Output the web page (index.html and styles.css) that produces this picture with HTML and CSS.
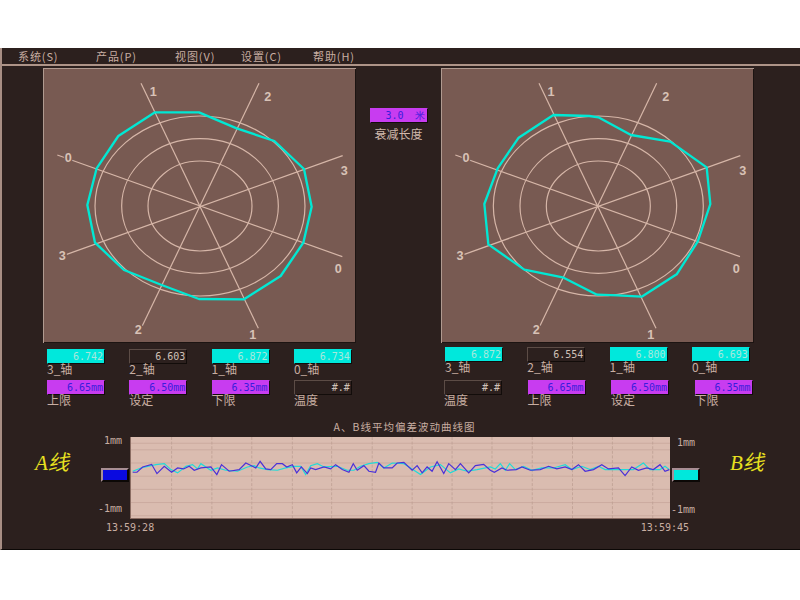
FILE: index.html
```html
<!DOCTYPE html>
<html lang="zh">
<head>
<meta charset="utf-8">
<title>系统</title>
<link rel="stylesheet" href="styles.css">
</head>
<body>
<div class="window">
  <nav class="menu">
    <span>系统(S)</span><span>产品(P)</span><span>视图(V)</span><span>设置(C)</span><span>帮助(H)</span>
  </nav>
  <section class="top">
    <svg class="panel" viewBox="9 24 939 825" width="313" height="275">
      <g class="rings"><ellipse cx="480" cy="438" rx="315" ry="270"/><ellipse cx="480" cy="438" rx="235" ry="202"/><ellipse cx="480" cy="438" rx="156" ry="135"/></g>
      <g class="spokes"><line x1="303" y1="70" x2="655" y2="805"/><line x1="657" y1="70" x2="307" y2="797"/><line x1="52" y1="285" x2="907" y2="590"/><line x1="908" y1="287" x2="80" y2="583"/></g>
      <polygon class="trace" points="345,157 477,157 590,205 703,243 792,327 815,440 790,548 722,648 612,718 477,717 365,675 252,630 165,548 142,435 170,325 235,228"/>
      <g class="axis-num"><text x="340" y="109">1</text><text x="683" y="124">2</text><text x="913" y="344">3</text><text x="895" y="640">0</text><text x="638" y="837">1</text><text x="295" y="822">2</text><text x="67" y="601">3</text><text x="85" y="306">0</text></g>
    </svg>
    <div class="center">
      <div class="field magenta length"><span>3.0</span><span>米</span></div>
      <div class="caption">衰减长度</div>
    </div>
    <svg class="panel" viewBox="15 24 939 825" width="313" height="275">
      <g class="rings"><ellipse cx="487" cy="438" rx="315" ry="270"/><ellipse cx="487" cy="438" rx="235" ry="202"/><ellipse cx="487" cy="438" rx="156" ry="135"/></g>
      <g class="spokes"><line x1="309" y1="70" x2="660" y2="805"/><line x1="662" y1="70" x2="312" y2="797"/><line x1="58" y1="285" x2="912" y2="590"/><line x1="913" y1="287" x2="85" y2="583"/></g>
      <polygon class="trace" points="352,165 460,168 487,172 585,225 703,245 812,322 823,432 785,545 722,643 617,710 545,706 483,704 380,652 265,629 157,553 145,432 185,325 248,233"/>
      <g class="axis-num"><text x="345" y="109">1</text><text x="689" y="124">2</text><text x="920" y="344">3</text><text x="901" y="640">0</text><text x="644" y="837">1</text><text x="301" y="822">2</text><text x="72" y="601">3</text><text x="90" y="306">0</text></g>
    </svg>
  </section>
  <section class="readouts">
    <div class="group">
      <div class="row">
        <div class="cell"><div class="field cyan">6.742</div><div class="label">3_轴</div></div>
        <div class="cell"><div class="field dark">6.603</div><div class="label">2_轴</div></div>
        <div class="cell"><div class="field cyan">6.872</div><div class="label">1_轴</div></div>
        <div class="cell"><div class="field cyan">6.734</div><div class="label">0_轴</div></div>
      </div>
      <div class="row">
        <div class="cell"><div class="field magenta">6.65mm</div><div class="label">上限</div></div>
        <div class="cell"><div class="field magenta">6.50mm</div><div class="label">设定</div></div>
        <div class="cell"><div class="field magenta">6.35mm</div><div class="label">下限</div></div>
        <div class="cell"><div class="field dark">#.#</div><div class="label">温度</div></div>
      </div>
    </div>
    <div class="group group-right">
      <div class="row">
        <div class="cell"><div class="field cyan">6.872</div><div class="label">3_轴</div></div>
        <div class="cell"><div class="field dark">6.554</div><div class="label">2_轴</div></div>
        <div class="cell"><div class="field cyan">6.800</div><div class="label">1_轴</div></div>
        <div class="cell"><div class="field cyan">6.693</div><div class="label">0_轴</div></div>
      </div>
      <div class="row row-wide">
        <div class="cell"><div class="field dark">#.#</div><div class="label">温度</div></div>
        <div class="cell"><div class="field magenta">6.65mm</div><div class="label">上限</div></div>
        <div class="cell"><div class="field magenta">6.50mm</div><div class="label">设定</div></div>
        <div class="cell"><div class="field magenta">6.35mm</div><div class="label">下限</div></div>
      </div>
    </div>
  </section>
  <h2 class="trend-title">A、B线平均偏差波动曲线图</h2>
  <section class="trend">
    <div class="side side-left">
      <div class="line-name">A线</div>
      <div class="scale">
        <span class="tick">1mm</span>
        <span class="swatch swatch-blue"></span>
        <span class="tick">-1mm</span>
      </div>
    </div>
    <div class="chart">
      <svg viewBox="0 -39 1620 246" preserveAspectRatio="none">
        <g class="hgrid"><line x1="0" x2="1620" y1="0" y2="0"/><line x1="0" x2="1620" y1="40" y2="40"/><line x1="0" x2="1620" y1="80" y2="80"/><line x1="0" x2="1620" y1="120" y2="120"/><line x1="0" x2="1620" y1="160" y2="160"/><line x1="0" x2="1620" y1="200" y2="200"/><line x1="0" x2="1620" y1="-20" y2="-20"/></g>
        <g class="vgrid"><line x1="122" x2="122" y1="-39" y2="207"/><line x1="243" x2="243" y1="-39" y2="207"/><line x1="363" x2="363" y1="-39" y2="207"/><line x1="485" x2="485" y1="-39" y2="207"/><line x1="603" x2="603" y1="-39" y2="207"/><line x1="725" x2="725" y1="-39" y2="207"/><line x1="845" x2="845" y1="-39" y2="207"/><line x1="965" x2="965" y1="-39" y2="207"/><line x1="1085" x2="1085" y1="-39" y2="207"/><line x1="1206" x2="1206" y1="-39" y2="207"/><line x1="1327" x2="1327" y1="-39" y2="207"/><line x1="1447" x2="1447" y1="-39" y2="207"/><line x1="1568" x2="1568" y1="-39" y2="207"/></g>
        <polyline class="wave-b" points="5,65 30,55 50,50 75,45 100,42 120,60 140,70 165,50 185,45 200,58 210,42 240,62 260,55 285,62 320,65 350,52 370,48 385,55 410,60 440,62 465,55 490,50 510,50 525,75 540,48 560,42 580,52 620,50 650,62 670,62 690,50 715,42 740,38 760,55 785,40 820,42 840,55 870,75 900,52 930,45 960,70 985,58 1010,65 1040,60 1080,52 1095,58 1110,42 1125,62 1138,42 1155,60 1180,50 1205,62 1235,55 1270,55 1305,45 1325,60 1355,50 1380,60 1405,50 1425,60 1475,60 1510,60 1540,40 1560,60 1590,60 1605,50 1618,60"/>
        <polyline class="wave-a" points="5,68 18,68 35,52 62,44 78,72 100,50 122,68 140,55 158,58 175,50 190,62 210,55 240,52 258,75 272,45 295,65 325,60 345,40 365,50 375,55 388,35 405,58 420,60 438,42 455,42 468,52 485,45 498,70 512,52 530,72 540,55 555,60 580,52 600,58 615,45 635,60 655,68 668,42 680,62 700,48 715,65 735,68 745,40 760,55 785,55 800,40 820,38 845,62 860,48 875,70 890,52 905,65 920,36 940,72 955,42 975,60 990,42 1015,70 1035,48 1060,44 1080,62 1092,68 1115,55 1130,62 1158,60 1175,52 1200,62 1230,60 1255,50 1280,58 1305,52 1325,60 1345,45 1365,65 1390,60 1415,45 1435,58 1465,55 1485,78 1505,52 1525,62 1550,55 1570,60 1590,45 1605,65 1618,60"/>
      </svg>
    </div>
    <div class="side side-right">
      <div class="scale scale-right">
        <span class="tick">1mm</span>
        <span class="swatch swatch-cyan"></span>
        <span class="tick tick-low">-1mm</span>
      </div>
      <div class="line-name line-name-right">B线</div>
    </div>
  </section>
  <div class="times"><span>13:59:28</span><span>13:59:45</span></div>
</div>
</body>
</html>
```
FILE: styles.css
```css
* { box-sizing: border-box; }
html, body { margin: 0; background: #fff; }
body { width: 800px; height: 600px; padding-top: 48px; overflow: hidden; font-family: "Noto Sans CJK SC", "Liberation Sans", sans-serif; }

.window {
  width: 800px;
  height: 502px;
  background: #2c201e;
  border-left: 2px solid #a88e84;
  border-bottom: 1px solid #0c0806;
  color: #c8aea2;
}

.menu {
  display: grid;
  grid-template-columns: 78px 79px 66px 72px auto;
  align-items: center;
  height: 18px;
  padding-left: 16px;
  border-bottom: 2px solid #ae9488;
  font-size: 11px;
  line-height: 14px;
  letter-spacing: 0.9px;
  color: #c8aea2;
}

.top { display: flex; padding: 2px 0 0 41px; }
.panel {
  display: block;
  flex: none;
  background: #785a52;
  box-shadow: inset 1px 1px 0 #b09a90, inset -1px -1px 0 #1c1412;
}
.rings ellipse { fill: none; stroke: #d6b6a8; stroke-width: 3.6; }
.spokes line { stroke: #d6b6a8; stroke-width: 3.6; }
.trace { fill: none; stroke: #00e8d4; stroke-width: 7; stroke-linejoin: round; }
.axis-num text {
  fill: #d8c2b6;
  stroke: #785a52;
  stroke-width: 8px;
  paint-order: stroke;
  font-family: "Liberation Sans", sans-serif;
  font-size: 38px;
  font-weight: 700;
  text-anchor: middle;
}

.center { display: flex; flex-direction: column; align-items: center; flex: none; width: 85px; padding-top: 40px; }
.caption { margin-top: 4px; font-size: 12px; line-height: 14px; color: #d0b8ac; }

.field {
  height: 15px;
  padding-right: 1px;
  font-family: "DejaVu Sans Mono", "Liberation Mono", monospace;
  font-size: 10px;
  line-height: 13px;
  text-align: right;
  border: 1px solid;
}
.cyan { background: #00e8dc; color: #a6e8dc; border-color: #00e8dc #120c0a #120c0a #00e8dc; }
.magenta { background: #c83cf0; color: #3a1cdc; border-color: #c83cf0 #120c0a #120c0a #c83cf0; }
.dark { background: #2c201e; color: #d0c0b8; border-color: #5c4c46 #120c0a #120c0a #5c4c46; }
.length { display: flex; justify-content: space-between; width: 58px; padding: 0 2px 0 15px; }

.readouts { display: flex; padding-left: 45px; }
.group { display: flex; flex: none; flex-direction: column; gap: 5px; width: 398px; padding-top: 6px; }
.group-right { gap: 7px; width: 350px; padding-top: 4px; }
.row { display: grid; grid-template-columns: repeat(4, 58px); column-gap: 24.3px; }
.row-wide { column-gap: 25.5px; margin-left: -1px; }
.label { font-size: 12px; line-height: 11px; white-space: nowrap; margin-top: -1px; margin-bottom: 1px; }

.trend-title {
  margin: 15px 0 4px;
  padding-left: 7px;
  font-size: 10.5px;
  font-weight: 400;
  line-height: 12px;
  letter-spacing: 1px;
  text-align: center;
  color: #c8aea2;
}

.trend { display: flex; height: 82px; }
.side { display: flex; flex: none; }
.side-left { width: 128px; padding-left: 33px; }
.line-name {
  width: 63px;
  padding-top: 14px;
  font-family: "Liberation Serif", "Noto Sans CJK SC", serif;
  font-size: 21px;
  font-style: italic;
  line-height: 24px;
  color: #e8e020;
}
.line-name-right { width: auto; margin-left: 30px; }
.scale { display: flex; flex: none; flex-direction: column; gap: 23px; width: 32px; }
.scale-right { width: 30px; padding-top: 2px; gap: 21px; }
.tick {
  display: block;
  padding-right: 8px;
  font-family: "DejaVu Sans Mono", "Liberation Mono", monospace;
  font-size: 10px;
  line-height: 8px;
  text-align: right;
  white-space: nowrap;
  color: #c8aea2;
}
.scale-right .tick { padding-right: 5px; }
.tick-low { margin-top: 3px; }
.swatch {
  display: block;
  flex: none;
  width: 28px;
  height: 14px;
  margin-left: 3px;
  border: 2px solid;
  border-color: #a88e94 #0c0806 #0c0806 #a88e94;
}
.scale-right .swatch { margin-left: 2px; }
.swatch-blue { background: #0a0ae0; }
.swatch-cyan { background: #00e8dc; }

.chart { flex: none; width: 540px; height: 82px; background: #dabcb0; border-left: 1px solid #8a6c62; border-bottom: 1px solid #8a6c62; }
.chart svg { display: block; width: 100%; height: 100%; }
.hgrid line { stroke: #c8a89c; stroke-width: 2.5; }
.vgrid line { stroke: #bfa094; stroke-width: 2.5; stroke-dasharray: 9 5; }
.wave-a { fill: none; stroke: #4a30d8; stroke-width: 3.6; }
.wave-b { fill: none; stroke: #20dcd8; stroke-width: 3.6; }

.times {
  display: flex;
  justify-content: space-between;
  width: 687px;
  margin-top: 4px;
  padding-left: 104px;
  font-family: "DejaVu Sans Mono", "Liberation Mono", monospace;
  font-size: 10px;
  line-height: 10px;
  color: #c8aea2;
}
```
